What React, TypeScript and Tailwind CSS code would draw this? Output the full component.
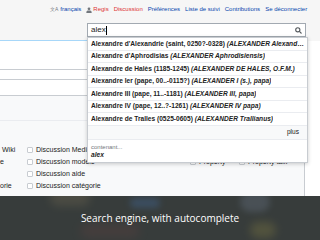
import React from "react";

const rows: [string, string][] = [
  ["Alexandre d'Alexandrie (saint, 0250?-0328) ", "(ALEXANDER Alexandrinus, patriarcha)"],
  ["Alexandre d'Aphrodisias ", "(ALEXANDER Aphrodisiensis)"],
  ["Alexandre de Halès (1185-1245) ", "(ALEXANDER DE HALES, O.F.M.)"],
  ["Alexandre Ier (pape, 00..-0115?) ", "(ALEXANDER I (s.), papa)"],
  ["Alexandre III (pape, 11..-1181) ", "(ALEXANDER III, papa)"],
  ["Alexandre IV (pape, 12..?-1261) ", "(ALEXANDER IV papa)"],
  ["Alexandre de Tralles (0525-0605) ", "(ALEXANDER Trallianus)"],
];

function Box() {
  return <span className="inline-block w-[6px] h-[6px] border border-[#c8ccd1] rounded-[1px] bg-white mr-[3px]" />;
}

export default function App() {
  return (
    <div className="relative w-[320px] h-[240px] overflow-hidden bg-[#f6f6f6] font-['Liberation_Sans',Arial,sans-serif] text-[#222]">
      {/* header links */}
      <div className="h-[19px] flex items-center pl-[50px] gap-[5px] text-[6px] whitespace-nowrap">
        <span className="flex items-center gap-[2px]">
          <span className="text-[5px] text-[#72777d]">文A</span>
          <span className="text-[#0645ad]">français</span>
        </span>
        <span className="flex items-center gap-[1px]">
          <svg width="6" height="6" viewBox="0 0 10 10" fill="#72777d">
            <circle cx="5" cy="3" r="2.3" />
            <path d="M0.5 10 C0.5 6 2.5 5.8 5 5.8 C7.5 5.8 9.5 6 9.5 10 Z" />
          </svg>
          <span className="text-[#d33]">Regis</span>
        </span>
        <span className="text-[#d33]">Discussion</span>
        <span className="text-[#0645ad]">Préférences</span>
        <span className="text-[#0645ad]">Liste de suivi</span>
        <span className="text-[#0645ad]">Contributions</span>
        <span className="text-[#0645ad]">Se déconnecter</span>
      </div>

      {/* search row */}
      <div className="flex h-[22px]">
        <div className="w-[87px] border-b border-[#a7d7f9]" />
        <div className="pt-[4px]">
          <div className="w-[219px] h-[14px] border border-[#a2a9b1] bg-white flex items-center justify-between px-[3px] text-[8px]">
            <span className="flex items-center">alex<span className="w-px h-[9px] bg-black" /></span>
            <svg width="7" height="7" viewBox="0 0 10 10" fill="none" stroke="#54595d" strokeWidth="1.6">
              <circle cx="4" cy="4" r="3" />
              <path d="M6.3 6.3 L9.3 9.3" />
            </svg>
          </div>
        </div>
      </div>

      {/* content */}
      <div className="flex h-[155px]">
        <div className="w-[305px] border-r border-[#c8ccd1] bg-white flex flex-col">
          <div className="h-[29px] border-b border-[#c8ccd1]" />
          <div className="h-[10px] border-b border-[#c8ccd1]" />
          <div className="h-[16px] border-b border-[#c8ccd1]" />
          <div className="h-[25px] border-b border-[#eaecf0] bg-[#f8f9fa]" />
          <div className="flex-1 bg-[#f8f9fa] pt-[23px] text-[7px] leading-[12px] whitespace-nowrap">
            <div className="flex h-[12px] items-center">
              <span className="w-[27px] pl-[2px]">Wiki</span>
              <Box />
              <span>Discussion MediaWiki</span>
            </div>
            <div className="flex h-[12px] items-center">
              <span className="w-[27px]">e</span>
              <Box />
              <span className="w-[154px]">Discussion modèle</span>
              <Box />
              <span className="w-[40px]">Property</span>
              <Box />
              <span>Property talk</span>
            </div>
            <div className="flex h-[11.5px] items-center">
              <span className="w-[27px]" />
              <Box />
              <span>Discussion aide</span>
            </div>
            <div className="flex h-[12px] items-center">
              <span className="w-[27px]">orie</span>
              <Box />
              <span>Discussion catégorie</span>
            </div>
          </div>
        </div>
        <div className="flex-1 bg-white" />
      </div>

      {/* caption band */}
      <div className="relative h-[44px] bg-[#373c3b] overflow-hidden flex items-center justify-center">
        <div className="absolute left-[50px] top-[-6px] w-[40px] h-[16px] rounded-full bg-[#6b6450] opacity-40 blur-[4px]" />
        <div className="absolute left-[130px] top-[2px] w-[30px] h-[10px] rounded-full bg-[#3e5a7a] opacity-60 blur-[3px]" />
        <div className="absolute left-[240px] top-[-4px] w-[30px] h-[20px] rounded-full bg-[#5b6470] opacity-50 blur-[3px]" />
        <div className="absolute left-[250px] top-[26px] w-[26px] h-[16px] rounded-full bg-[#6d6a40] opacity-50 blur-[4px]" />
        <div className="absolute left-[80px] top-[28px] w-[60px] h-[14px] rounded-full bg-[#5a4040] opacity-40 blur-[5px]" />
        <span className="relative text-white text-[10px] font-['Open_Sans',sans-serif]">Search engine, with autocomplete</span>
      </div>

      {/* dropdown */}
      <div className="absolute left-[87px] top-[37px] w-[221px] bg-white border border-[#c8ccd1] shadow-[0_1px_4px_rgba(0,0,0,0.2)] text-[6.6px]">
        {rows.map(([a, b], i) => (
          <div key={i} className="h-[12.5px] flex items-center px-[3px] border-b border-[#eaecf0] font-bold whitespace-nowrap overflow-hidden">
            <span className="truncate">
              {a}
              <i>{b}</i>
            </span>
          </div>
        ))}
        <div className="h-[14px] flex items-center justify-end pr-[8px] bg-[#f8f9fa] border-b border-[#eaecf0]">plus</div>
        <div className="h-[22px] px-[3px] pt-[3px] leading-[8px]">
          <div className="text-[6px] text-[#72777d]">contenant...</div>
          <div className="font-bold italic">alex</div>
        </div>
      </div>
    </div>
  );
}
